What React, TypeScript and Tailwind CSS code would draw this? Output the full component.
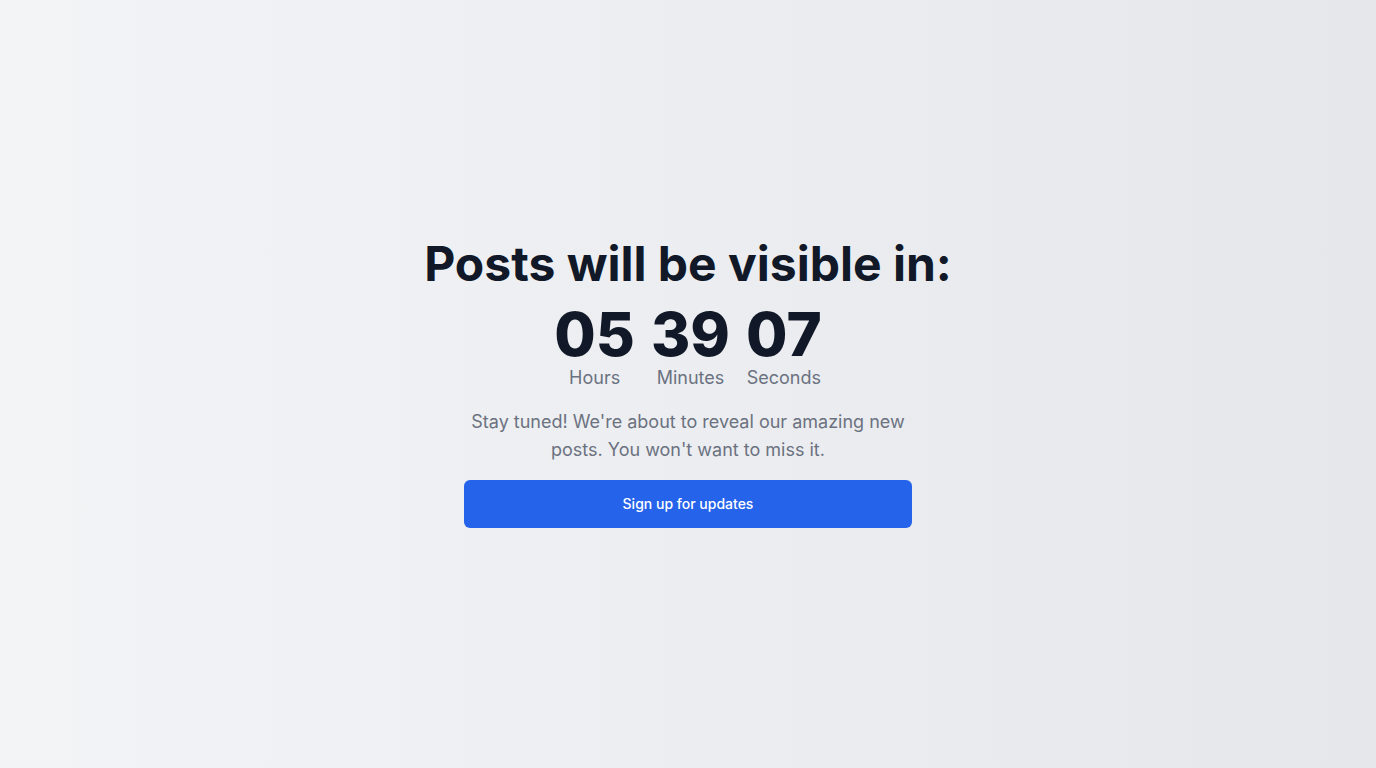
export default function App() {
  const units = [
    { value: '05', label: 'Hours' },
    { value: '39', label: 'Minutes' },
    { value: '07', label: 'Seconds' },
  ]

  return (
    <div
      className="min-h-screen w-full bg-gradient-to-r from-[#f3f4f6] to-[#e5e7eb] flex items-center justify-center px-4"
      style={{ fontFamily: 'Inter, "Noto Sans", sans-serif' }}
    >
      <div className="flex flex-col items-center space-y-4 text-center">
        <h1 className="text-5xl font-bold text-[#111827]">
          Posts will be visible in:
        </h1>

        <div className="flex items-start gap-4">
          {units.map((u) => (
            <div key={u.label} className="flex flex-col items-center">
              <span className="text-6xl font-extrabold text-[#111827] leading-none">{u.value}</span>
              <span className="text-lg text-[#6b7280]">{u.label}</span>
            </div>
          ))}
        </div>

        <p className="max-w-md text-lg text-[#6b7280]">
          Stay tuned! We're about to reveal our amazing new posts. You won't want to miss it.
        </p>

        <button className="w-[448px] h-12 rounded-md bg-[#2563eb] text-sm font-medium text-white">
          Sign up for updates
        </button>
      </div>
    </div>
  )
}
